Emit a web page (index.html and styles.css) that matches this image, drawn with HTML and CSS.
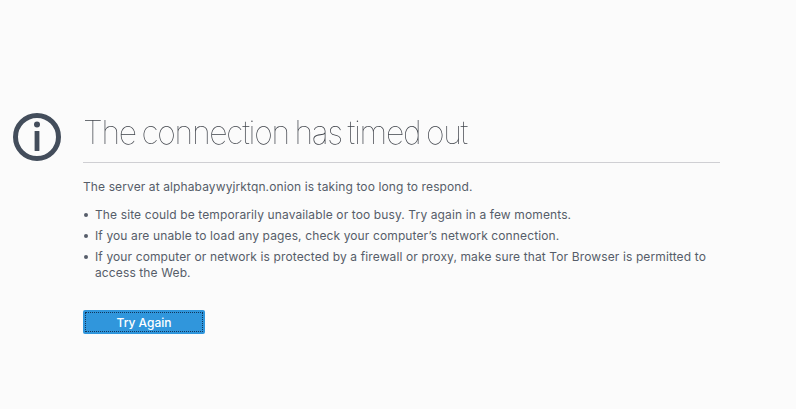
FILE: index.html
```html
<!DOCTYPE html>
<html lang="en">
<head>
<meta charset="utf-8">
<title>Problem loading page</title>
<link rel="stylesheet" href="styles.css">
</head>
<body>
<main class="page">
  <svg class="icon" viewBox="0 0 48 48" aria-hidden="true">
    <circle class="icon-ring" cx="24" cy="24" r="21.5"/>
    <circle class="icon-fill" cx="24" cy="11.6" r="3"/>
    <rect class="icon-fill" x="21.6" y="18" width="4.8" height="20" rx="0.6"/>
  </svg>
  <div class="content">
    <h1 class="title"><span class="title-text">The connection has timed out</span></h1>
    <p class="lead">The server at alphabaywyjrktqn.onion is taking too long to respond.</p>
    <ul class="tips">
      <li>The site could be temporarily unavailable or too busy. Try again in a few moments.</li>
      <li>If you are unable to load any pages, check your computer’s network connection.</li>
      <li>If your computer or network is protected by a firewall or proxy, make sure that Tor Browser is permitted to access the Web.</li>
    </ul>
    <button class="retry" type="button"><span class="retry-label">Try Again</span></button>
  </div>
</main>
</body>
</html>
```

FILE: styles.css
```css
html, body {
  margin: 0;
  height: 100%;
  background: #fbfbfb;
}
body {
  font-family: "Inter", "Liberation Sans", sans-serif;
  color: #565d69;
  overflow: hidden;
}
.page {
  display: flex;
  align-items: flex-start;
  padding: 113px 76px 0 13px;
}
.icon {
  flex: none;
  width: 48px;
  height: 48px;
  margin-right: 22px;
}
.icon-ring {
  fill: none;
  stroke: #434d5b;
  stroke-width: 5;
}
.icon-fill {
  fill: #434d5b;
}
.content {
  flex: 1;
  min-width: 0;
}
.title {
  margin: 0;
  height: 49px;
  border-bottom: 1px solid #cfcfd3;
  font-size: 32px;
  font-weight: 100;
  line-height: 40px;
  letter-spacing: -1.3px;
  word-spacing: -2px;
  color: #3f434a;
}
.title-text {
  display: inline-block;
  will-change: transform;
}
.lead {
  margin: 16px 0 0;
  font-size: 12px;
  line-height: 16px;
  letter-spacing: 0.11px;
}
.tips {
  list-style: none;
  margin: 12px 0 0;
  padding: 0;
  font-size: 12px;
  line-height: 16px;
  letter-spacing: 0.12px;
}
.tips li {
  position: relative;
  padding-left: 12px;
  margin-bottom: 5px;
}
.tips li::before {
  content: "";
  position: absolute;
  left: 1px;
  top: 6px;
  width: 4px;
  height: 4px;
  border-radius: 50%;
  background: #565d69;
}
.retry {
  display: block;
  width: 122px;
  height: 24px;
  margin-top: 29px;
  padding: 2px;
  border: 0;
  border-radius: 2px;
  background: #3096dc;
  color: #fff;
  font: 500 12px "Inter", "Liberation Sans", sans-serif;
}
.retry-label {
  display: flex;
  align-items: center;
  justify-content: center;
  height: 100%;
  box-sizing: border-box;
  border: 1px dotted #12365a;
}
```
